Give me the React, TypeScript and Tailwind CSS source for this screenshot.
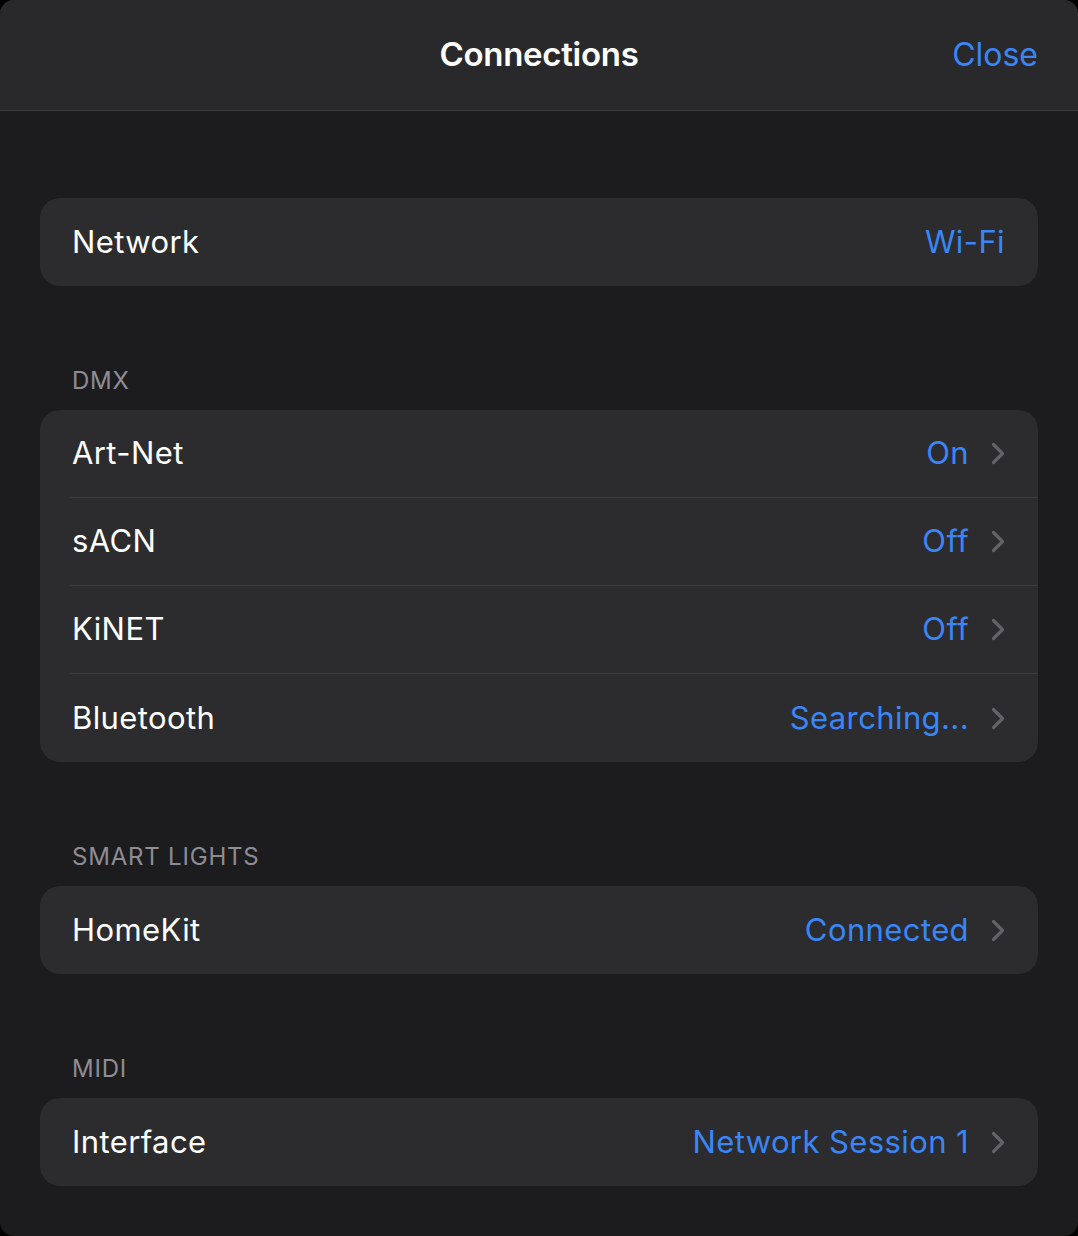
import type { ReactNode } from "react";

type Row = { label: string; value: string; chevron?: boolean };

const SECTIONS: { title: string; rows: Row[] }[] = [
  {
    title: "DMX",
    rows: [
      { label: "Art-Net", value: "On", chevron: true },
      { label: "sACN", value: "Off", chevron: true },
      { label: "KiNET", value: "Off", chevron: true },
      { label: "Bluetooth", value: "Searching...", chevron: true },
    ],
  },
  {
    title: "SMART LIGHTS",
    rows: [{ label: "HomeKit", value: "Connected", chevron: true }],
  },
  {
    title: "MIDI",
    rows: [{ label: "Interface", value: "Network Session 1", chevron: true }],
  },
];

function Chevron() {
  return (
    <svg width="14" height="23" viewBox="0 0 14 23" className="shrink-0" fill="none">
      <path
        d="M2.5 2.5 L11.5 11.5 L2.5 20.5"
        stroke="#626267"
        strokeWidth="3.2"
        strokeLinecap="round"
        strokeLinejoin="round"
      />
    </svg>
  );
}

function Card({ children }: { children: ReactNode }) {
  return (
    <div className="mx-[40px] rounded-[20px] bg-[#2c2c2e] overflow-hidden">{children}</div>
  );
}

function RowItem({ row, last }: { row: Row; last: boolean }) {
  return (
    <div>
      <div
        className={`${last ? "h-[88px]" : "h-[87px]"} flex items-center pl-[32px] pr-[33px] tracking-[0.4px]`}
      >
        <span className="flex-1 text-white">{row.label}</span>
        <span className="text-[#3a86f7]">{row.value}</span>
        {row.chevron && (
          <span className="ml-[22px] flex items-center">
            <Chevron />
          </span>
        )}
      </div>
      {!last && <div className="ml-[30px] h-px bg-[#3d3d41]" />}
    </div>
  );
}

export default function App() {
  return (
    <div className="w-[1078px] h-[1236px] bg-black">
      <div
        className="w-full h-full rounded-[14px] overflow-hidden bg-[#1c1c1e] text-[31px]"
        style={{ fontFamily: "Inter, 'Noto Sans', sans-serif" }}
      >
        <div className="h-[111px] bg-[#29292b] border-b border-[#3a3a3c] flex items-center justify-center relative">
          <span className="text-white text-[33px] font-semibold tracking-[-0.3px]">Connections</span>
          <span className="absolute right-[40px] text-[#3a86f7] text-[32px]">Close</span>
        </div>

        <div className="pt-[87px]">
          <Card>
            <RowItem row={{ label: "Network", value: "Wi-Fi" }} last />
          </Card>

          {SECTIONS.map((s) => (
            <div key={s.title}>
              <div className="mt-[81px] mb-[15px] h-[28px] leading-[28px] pl-[72px] text-[24px] tracking-[0.8px] text-[#8d8d93]">
                {s.title}
              </div>
              <Card>
                {s.rows.map((r, i) => (
                  <RowItem key={r.label} row={r} last={i === s.rows.length - 1} />
                ))}
              </Card>
            </div>
          ))}
        </div>
      </div>
    </div>
  );
}
